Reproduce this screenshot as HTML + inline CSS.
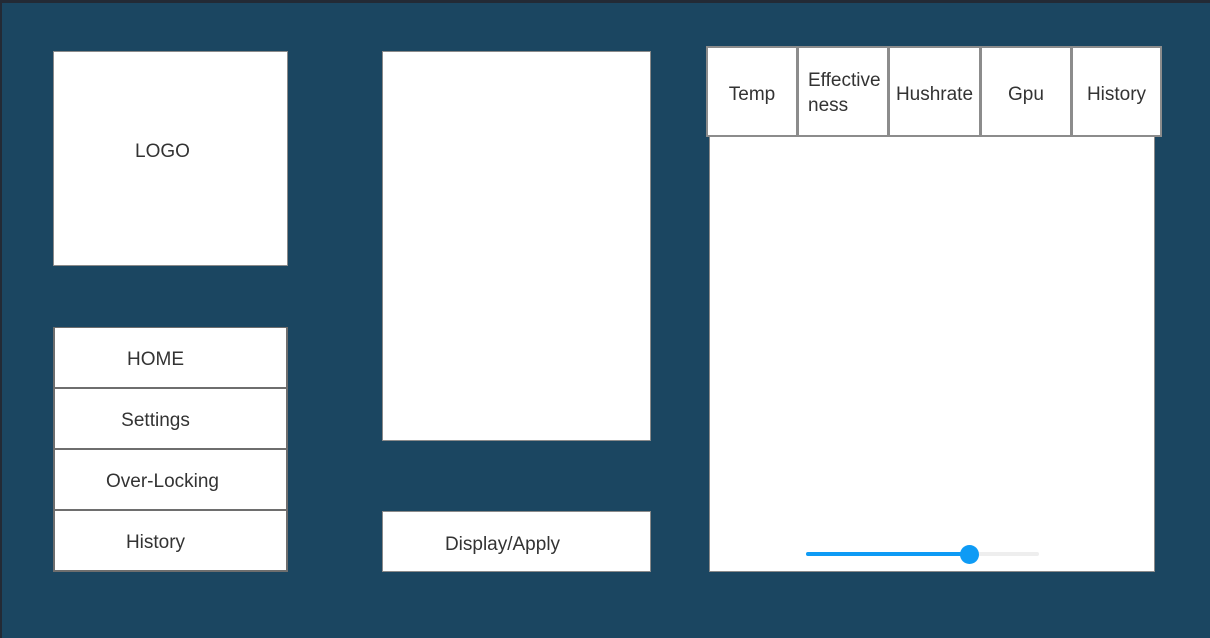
<!DOCTYPE html>
<html><head><meta charset="utf-8"><style>
*{margin:0;padding:0;box-sizing:border-box}
body{width:1210px;height:638px;background:#1b4661;position:relative;overflow:hidden;font-family:"Liberation Sans",sans-serif;color:#333;font-size:19px}
.top{position:absolute;left:0;top:0;width:1210px;height:3px;background:#232a35}
.left{position:absolute;left:0;top:0;width:2px;height:638px;background:#232a35}
.b{position:absolute;background:#fff;border:1px solid #8a8a8a;display:flex;align-items:center;justify-content:center;text-align:center;padding-top:4px}
.n{border:2px solid #6e6e6e;border-top-width:1px}
.t{border:2px solid #8c8c8c;padding-top:6px}
</style></head><body>
<div class="top"></div><div class="left"></div>
<div class="b" style="left:53px;top:51px;width:235px;height:215px;padding-right:16px;padding-bottom:18px">LOGO</div>
<div class="b n" style="left:53px;top:327px;width:235px;height:62px;padding-right:30px">HOME</div>
<div class="b n" style="left:53px;top:388px;width:235px;height:62px;padding-right:30px">Settings</div>
<div class="b n" style="left:53px;top:449px;width:235px;height:62px;padding-right:16px">Over-Locking</div>
<div class="b n" style="left:53px;top:510px;width:235px;height:62px;padding-right:30px">History</div>
<div class="b" style="left:382px;top:51px;width:269px;height:390px"></div>
<div class="b" style="left:382px;top:511px;width:269px;height:61px;padding-right:28px;padding-top:6px">Display/Apply</div>
<div class="b" style="left:709px;top:135px;width:446px;height:437px"></div>
<div class="b t" style="left:706px;top:46px;width:92px;height:91px">Temp</div>
<div class="b t" style="left:797px;top:46px;width:92px;height:91px;justify-content:flex-start;padding-left:9px;text-align:left;line-height:25px;padding-top:2px">Effective<br>ness</div>
<div class="b t" style="left:888px;top:46px;width:93px;height:91px">Hushrate</div>
<div class="b t" style="left:980px;top:46px;width:92px;height:91px">Gpu</div>
<div class="b t" style="left:1071px;top:46px;width:91px;height:91px">History</div>
<div style="position:absolute;left:806px;top:552px;width:233px;height:4px;background:#eee;border-radius:2px"></div>
<div style="position:absolute;left:806px;top:552px;width:163px;height:4px;background:#0e9bf5;border-radius:2px"></div>
<div style="position:absolute;left:960px;top:545px;width:19px;height:19px;background:#0e9bf5;border-radius:50%"></div>
</body></html>
